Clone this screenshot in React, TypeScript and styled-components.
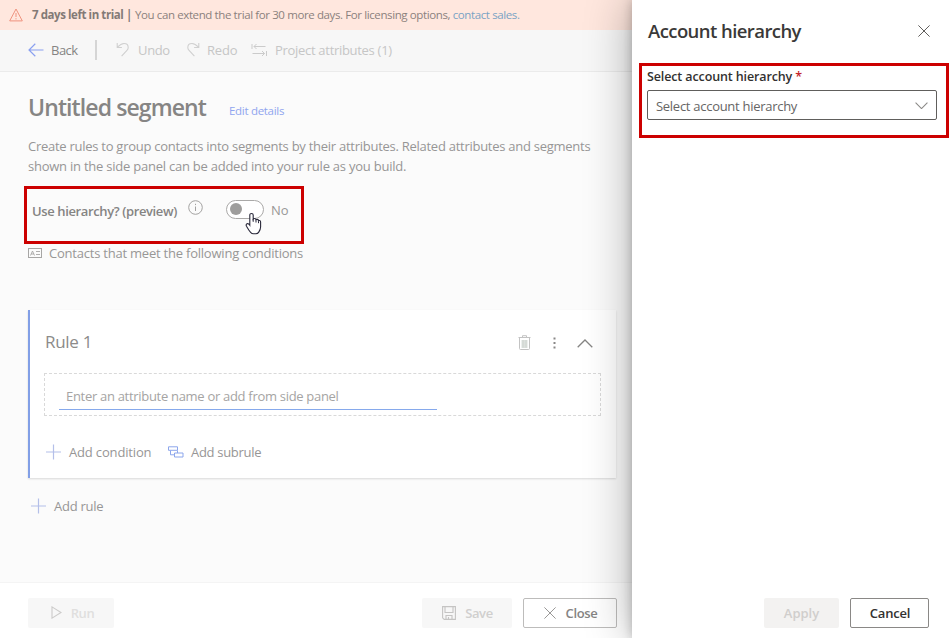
import React from 'react';
import styled, { createGlobalStyle } from 'styled-components';

const GlobalStyle = createGlobalStyle`
  * { box-sizing: border-box; }
  body { margin: 0; font-family: "Open Sans", "Noto Sans", sans-serif; font-size: 13px; }
  button { font-family: inherit; margin: 0; }
  h1, h2, h3, p { margin: 0; }
  svg { display: block; flex: none; }
`;

const Screen = styled.div`
  display: grid;
  grid-template-columns: 632px 318px;
  width: 950px;
  height: 638px;
  overflow: hidden;
`;

const Main = styled.main`
  display: flex;
  flex-direction: column;
  min-width: 0;
  background: #fbfbfb;
`;

const Banner = styled.div`
  display: flex;
  align-items: center;
  height: 30px;
  flex: none;
  padding: 0 0 1px 9px;
  background: #ffe7de;
  color: #8b817d;
  font-size: 11.5px;
  letter-spacing: -0.39px;
  white-space: nowrap;
`;

const BannerStrong = styled.strong`
  width: 103px;
  margin-left: 9px;
  font-weight: 700;
  letter-spacing: -0.43px;
  color: #837a76;
`;

const BannerLink = styled.a`
  color: #7aa3c4;
`;

const Toolbar = styled.div`
  display: flex;
  align-items: center;
  height: 42px;
  flex: none;
  padding: 0 0 1px 28px;
  border-bottom: 1px solid #ebebeb;
  background: #f7f7f7;
`;

const ToolButton = styled.button<{ $muted?: boolean; $width: number; $spacing: number; $gap: number }>`
  display: flex;
  align-items: center;
  gap: ${p => p.$gap}px;
  width: ${p => p.$width}px;
  padding: 0;
  border: 0;
  background: none;
  color: ${p => (p.$muted ? '#c6c6c6' : '#858483')};
  font-size: 13px;
  line-height: 20px;
  letter-spacing: ${p => p.$spacing}px;
  white-space: nowrap;
`;

const Divider = styled.div`
  width: 2px;
  height: 20px;
  margin: 0 19px 0 -1px;
  background: #d5d5d5;
`;

const Content = styled.section`
  flex: 1;
  padding: 20px 16px 0 28px;
`;

const TitleRow = styled.div`
  display: flex;
  height: 44px;
`;

const Title = styled.h1`
  width: 201px;
  color: #868584;
  font-size: 23px;
  font-weight: 600;
  line-height: 30px;
  letter-spacing: -0.9px;
  white-space: nowrap;
`;

const EditLink = styled.a`
  padding-top: 11px;
  color: #90a5ef;
  font-size: 11.5px;
  line-height: 16px;
  letter-spacing: -0.3px;
`;

const Intro = styled.p<{ $spacing: number }>`
  color: #979696;
  line-height: 20px;
  letter-spacing: ${p => p.$spacing}px;
  white-space: nowrap;
`;

const HierarchyBox = styled.div`
  display: flex;
  align-items: center;
  width: 280px;
  height: 58px;
  margin: 10px 0 0 -4px;
  padding: 0 0 12px 5px;
  border: 3px solid #cc0000;
`;

const HierarchyLabel = styled.span`
  width: 156px;
  padding-top: 4px;
  color: #858483;
  font-weight: 600;
  letter-spacing: -0.38px;
  white-space: nowrap;
`;

const InfoMark = styled.span`
  padding-bottom: 3px;
`;

const Toggle = styled.span`
  display: flex;
  align-items: center;
  width: 38px;
  height: 19px;
  margin: 0 7px 0 23px;
  padding-left: 3px;
  border: 1px solid #aaa9a8;
  border-radius: 10px;
  background: #fff;
  position: relative;
`;

const ToggleKnob = styled.span`
  width: 12px;
  height: 12px;
  border-radius: 50%;
  background: #9e9d9c;
`;

const Pointer = styled.svg`
  position: absolute;
  left: 17px;
  top: 11px;
`;

const ToggleText = styled.span`
  padding-top: 2px;
  color: #989796;
`;

const ContactsRow = styled.div`
  display: flex;
  align-items: center;
  gap: 7px;
  height: 20px;
  padding-bottom: 2px;
  color: #989796;
  letter-spacing: -0.22px;
`;

const RuleCard = styled.article`
  height: 168px;
  margin-top: 46px;
  padding: 20px 15px 0 14px;
  border-left: 2px solid #829fe6;
  background: #fff;
  box-shadow: 0 1px 2px rgba(0, 0, 0, 0.14);
`;

const RuleHeader = styled.div`
  display: flex;
  align-items: center;
  height: 24px;
  padding-left: 1px;
`;

const RuleTitle = styled.h3`
  flex: 1;
  color: #8c8b8a;
  font-size: 17px;
  font-weight: 400;
  line-height: 24px;
  letter-spacing: -0.3px;
`;

const RuleActions = styled.div`
  display: flex;
  align-items: center;
  gap: 21px;
  padding: 2px 8px 0 0;
`;

const DropZone = styled.div`
  height: 43px;
  margin-top: 19px;
  padding: 12px 14px 0;
  border: 1px dashed #d9d9d9;
`;

const AttributeInput = styled.div`
  width: 378px;
  height: 24px;
  padding-left: 7px;
  border-bottom: 1px solid #86a9ec;
  color: #a5a4a3;
  line-height: 20px;
  letter-spacing: -0.3px;
`;

const RuleFooter = styled.div`
  display: flex;
  margin: 26px 0 0 2px;
`;

const AddButton = styled.button<{ $spacing: number; $width?: number }>`
  display: flex;
  align-items: center;
  gap: 7px;
  width: ${p => (p.$width ? p.$width + 'px' : 'auto')};
  height: 20px;
  padding: 0;
  border: 0;
  background: none;
  color: #979696;
  font-size: 13px;
  letter-spacing: ${p => p.$spacing}px;
  white-space: nowrap;
`;

const AddRuleRow = styled.div`
  display: flex;
  padding: 18px 0 0 3px;
`;

const Footer = styled.footer`
  display: flex;
  gap: 11px;
  height: 56px;
  flex: none;
  padding: 15px 15px 0 28px;
  border-top: 1px solid #f4f4f4;
  background: #fff;
`;

const Spacer = styled.div`
  flex: 1;
`;

const tones = {
  disabled: 'background:#f7f7f7;border:0;color:#d0cfce;',
  faint: 'background:#f7f7f7;border:0;color:#e0dfde;',
  panelDisabled: 'background:#f3f2f1;border:0;color:#d0cecc;',
  outline: 'background:#fff;border:1px solid #bdbcbb;color:#858483;',
  solid: 'background:#fff;border:1px solid #8a8886;color:#323130;',
};

const ActionButton = styled.button<{ $tone: keyof typeof tones; $width: number; $spacing: number; $inset?: number }>`
  display: flex;
  align-items: center;
  justify-content: center;
  gap: 9px;
  width: ${p => p.$width}px;
  height: 30px;
  padding: 0 0 1px ${p => p.$inset ?? 0}px;
  border-radius: 2px;
  font-size: 13px;
  font-weight: 600;
  letter-spacing: ${p => p.$spacing}px;
  ${p => tones[p.$tone]}
`;

const SidePanel = styled.aside`
  display: flex;
  flex-direction: column;
  position: relative;
  background: #fff;
  box-shadow: 0 0 44px rgba(0, 0, 0, 0.32), 0 0 10px rgba(0, 0, 0, 0.22);
`;

const PanelHeader = styled.div`
  display: flex;
  align-items: center;
  justify-content: space-between;
  height: 63px;
  padding: 0 20px 1px 16px;
`;

const PanelTitle = styled.h2`
  color: #3a3938;
  font-size: 18.5px;
  font-weight: 600;
  line-height: 26px;
  letter-spacing: -0.57px;
`;

const FieldBox = styled.div`
  width: 310px;
  height: 75px;
  margin-left: 7px;
  padding: 2px 9px 0 5px;
  border: 3px solid #cc0000;
`;

const FieldLabel = styled.div`
  color: #323130;
  font-size: 12.5px;
  font-weight: 600;
  line-height: 18px;
  letter-spacing: -0.12px;
`;

const Required = styled.span`
  color: #c5262c;
`;

const Select = styled.div`
  display: flex;
  align-items: center;
  justify-content: space-between;
  width: 290px;
  height: 30px;
  margin-top: 4px;
  padding: 1px 8px 0 8px;
  border: 1px solid #605e5c;
  border-radius: 2px;
  color: #666564;
  letter-spacing: -0.28px;
`;

const PanelFooter = styled.div`
  display: flex;
  justify-content: flex-end;
  gap: 11px;
  margin-top: auto;
  padding: 0 21px 10px 0;
`;

const WarningIcon = () => (
  <svg width="14" height="14" viewBox="0 0 14 14" fill="none" stroke="#ef927e">
    <path d="M7 1 L13.3 12.9 H.7 Z" />
    <path d="M7 5v4M7 10.2v1.2" />
  </svg>
);

const BackIcon = () => (
  <svg width="16" height="14" viewBox="0 0 16 14" fill="none" stroke="#8aa0f0" strokeWidth="1.2">
    <path d="M15.5 7H1M7.3.8L1 7l6.3 6.2" />
  </svg>
);

const UndoIcon = ({ flip = false }: { flip?: boolean }) => (
  <svg width="14" height="16" viewBox="0 0 14 16" fill="none" stroke="#d0d0d0" strokeWidth="1.1">
    <g transform={flip ? 'translate(14 0) scale(-1 1)' : undefined}>
      <path d="M1.2 1v4.500h4.700M1.500 5.200C3.500 3 5.500 1.500 8 1.500c2.600 0 4.200 1.700 4.200 3.900 0 1.400-.5 2.300-1.500 3.300L5.600 14.200" />
    </g>
  </svg>
);

const AttributesIcon = () => (
  <svg width="17" height="14" viewBox="0 0 17 14" fill="none" stroke="#cbcbcb">
    <path d="M1 1v5M3 3.500H14.500M5.500 1L3 3.500 5.500 6M15.500 8v5M1.500 10.500H13.500M11 8l2.500 2.500L11 13" />
  </svg>
);

const InfoIcon = () => (
  <svg width="15" height="15" viewBox="0 0 15 15" fill="none" stroke="#a3a2a1">
    <circle cx="7.5" cy="7.5" r="6.8" />
    <path d="M7.5 6.5v4.500M7.5 3.8v1.300" />
  </svg>
);

const CardIcon = () => (
  <svg width="14" height="11" viewBox="0 0 14 11" fill="none" stroke="#a7a6a5">
    <rect x=".5" y=".5" width="13" height="9" />
    <path d="M2.500 7.500L4.500 3l2 4.500M3.200 6h2.600M8 3.500h4M8 6.500h4" strokeWidth=".9" />
  </svg>
);

const HandPointer = () => (
  <Pointer width="20" height="24" viewBox="0 0 20 24">
    <path
      d="M7.500 1.500c1 0 1.700.6 1.700 1.600V7c.3-.4.800-.6 1.400-.5.8 0 1.300.5 1.400 1.200.4-.3.8-.4 1.300-.3.7.1 1.200.6 1.200 1.200.4-.2.800-.2 1.200 0 .6.2.9.7.9 1.400v5c0 2.200-.9 3.800-2 5.400-.6.9-1.400 1.400-2.700 1.400H9.400c-1.200 0-2-.5-2.800-1.400-1.500-1.600-2.800-3.900-4.100-6.200-.5-1-.3-2 .5-2.400 1-.4 1.900.1 2.800 1.400V3.100c0-1 .7-1.600 1.700-1.600z"
      fill="#fff" stroke="#29283a" strokeWidth="1.1"
    />
    <path d="M9.200 7v2.800M12 8.200v2.300M14.500 9.200v2" stroke="#29283a" strokeWidth="1" fill="none" />
  </Pointer>
);

const TrashIcon = () => (
  <svg width="14" height="16" viewBox="0 0 14 16" fill="none" stroke="#c3c3c3">
    <rect x="3.500" y="5" width="6" height="8" fill="#dce1dd" stroke="none" />
    <path d="M.500 2.500h12M4.500 2.500V.7h4v1.800M1.500 2.500v11q0 1 1 1h8q1 0 1-1v-11" />
    <path d="M5 5v7.500M8 5v7.500" stroke="#cfd4d0" />
  </svg>
);

const MoreIcon = () => (
  <svg width="3" height="12" viewBox="0 0 3 12" fill="#898887">
    <rect x=".5" y=".5" width="2" height="2" />
    <rect x=".5" y="5" width="2" height="2" />
    <rect x=".5" y="9.500" width="2" height="2" />
  </svg>
);

const Chevron = ({ up = false, width, color }: { up?: boolean; width: number; color: string }) => (
  <svg width={width} height={width / 2 + 1} viewBox="0 0 16 9" fill="none" stroke={color} strokeWidth="1.3">
    <path d={up ? 'M.7 8.300L8 1l7.300 7.300' : 'M.7.700L8 8l7.300-7.300'} />
  </svg>
);

const PlusIcon = () => (
  <svg width="16" height="16" viewBox="0 0 16 16" stroke="#b4bfe9" strokeWidth="1.2">
    <path d="M7.500 .5v15M0 8h15" />
  </svg>
);

const SubruleIcon = () => (
  <svg width="16" height="12" viewBox="0 0 16 12" fill="none" stroke="#8ca6ec">
    <path d="M.5.8h9v3.500h-9zM6.500 7h8.500v4H6.500zM2.500 4.500v4.300h4M9.500 4.500V7" />
  </svg>
);

const PlayIcon = () => (
  <svg width="11" height="13" viewBox="0 0 11 13" fill="none" stroke="#cccbca" strokeWidth="1.1">
    <path d="M1 .9l9 5.600-9 5.600z" />
  </svg>
);

const SaveIcon = () => (
  <svg width="14" height="14" viewBox="0 0 14 14" fill="none" stroke="#c5c4c3" strokeWidth="1.1">
    <path d="M.6.6h12.800v12.800H2.200L.6 11.800zM3 .6v5.900h8V.6M4 13.400V9.500h6v3.900M6.500 11v2.400" />
  </svg>
);

const CrossIcon = ({ color }: { color: string }) => (
  <svg width="12" height="12" viewBox="0 0 12 12" stroke={color}>
    <path d="M.4.4l11.200 11.200M11.600.4L.4 11.600" />
  </svg>
);

export default function App() {
  return (
    <Screen>
      <GlobalStyle />
      <Main>
        <Banner>
          <WarningIcon />
          <BannerStrong>7 days left in trial |</BannerStrong>
          <span>
            You can extend the trial for 30 more days. For licensing options, <BannerLink>contact sales.</BannerLink>
          </span>
        </Banner>
        <Toolbar>
          <ToolButton $width={68} $gap={7} $spacing={-0.5}><BackIcon />Back</ToolButton>
          <Divider />
          <ToolButton $muted $width={70} $gap={8} $spacing={-0.35}><UndoIcon />Undo</ToolButton>
          <ToolButton $muted $width={65} $gap={7} $spacing={-0.2}><UndoIcon flip />Redo</ToolButton>
          <ToolButton $muted $width={145} $gap={7} $spacing={-0.3}><AttributesIcon />Project attributes (1)</ToolButton>
        </Toolbar>
        <Content>
          <TitleRow>
            <Title>Untitled segment</Title>
            <EditLink>Edit details</EditLink>
          </TitleRow>
          <Intro $spacing={-0.265}>
            Create rules to group contacts into segments by their attributes. Related attributes and segments
          </Intro>
          <Intro $spacing={-0.235}>shown in the side panel can be added into your rule as you build.</Intro>
          <HierarchyBox>
            <HierarchyLabel>Use hierarchy? (preview)</HierarchyLabel>
            <InfoMark><InfoIcon /></InfoMark>
            <Toggle>
              <ToggleKnob />
              <HandPointer />
            </Toggle>
            <ToggleText>No</ToggleText>
          </HierarchyBox>
          <ContactsRow><CardIcon />Contacts that meet the following conditions</ContactsRow>
          <RuleCard>
            <RuleHeader>
              <RuleTitle>Rule 1</RuleTitle>
              <RuleActions>
                <TrashIcon />
                <MoreIcon />
                <Chevron up width={16} color="#858483" />
              </RuleActions>
            </RuleHeader>
            <DropZone>
              <AttributeInput>Enter an attribute name or add from side panel</AttributeInput>
            </DropZone>
            <RuleFooter>
              <AddButton $width={122} $spacing={-0.16}><PlusIcon />Add condition</AddButton>
              <AddButton $spacing={-0.3}><SubruleIcon />Add subrule</AddButton>
            </RuleFooter>
          </RuleCard>
          <AddRuleRow>
            <AddButton $spacing={-0.25}><PlusIcon />Add rule</AddButton>
          </AddRuleRow>
        </Content>
        <Footer>
          <ActionButton $tone="faint" $width={86} $spacing={-0.4} $inset={3}><PlayIcon />Run</ActionButton>
          <Spacer />
          <ActionButton $tone="disabled" $width={90} $spacing={-0.4} $inset={1}><SaveIcon />Save</ActionButton>
          <ActionButton $tone="outline" $width={94} $spacing={-0.3} $inset={2}><CrossIcon color="#999897" />Close</ActionButton>
        </Footer>
      </Main>
      <SidePanel>
        <PanelHeader>
          <PanelTitle>Account hierarchy</PanelTitle>
          <CrossIcon color="#605e5c" />
        </PanelHeader>
        <FieldBox>
          <FieldLabel>Select account hierarchy <Required>*</Required></FieldLabel>
          <Select>
            Select account hierarchy
            <Chevron width={13} color="#8a8886" />
          </Select>
        </FieldBox>
        <PanelFooter>
          <ActionButton $tone="panelDisabled" $width={75} $spacing={0}>Apply</ActionButton>
          <ActionButton $tone="solid" $width={79} $spacing={-0.2} $inset={1}>Cancel</ActionButton>
        </PanelFooter>
      </SidePanel>
    </Screen>
  );
}
